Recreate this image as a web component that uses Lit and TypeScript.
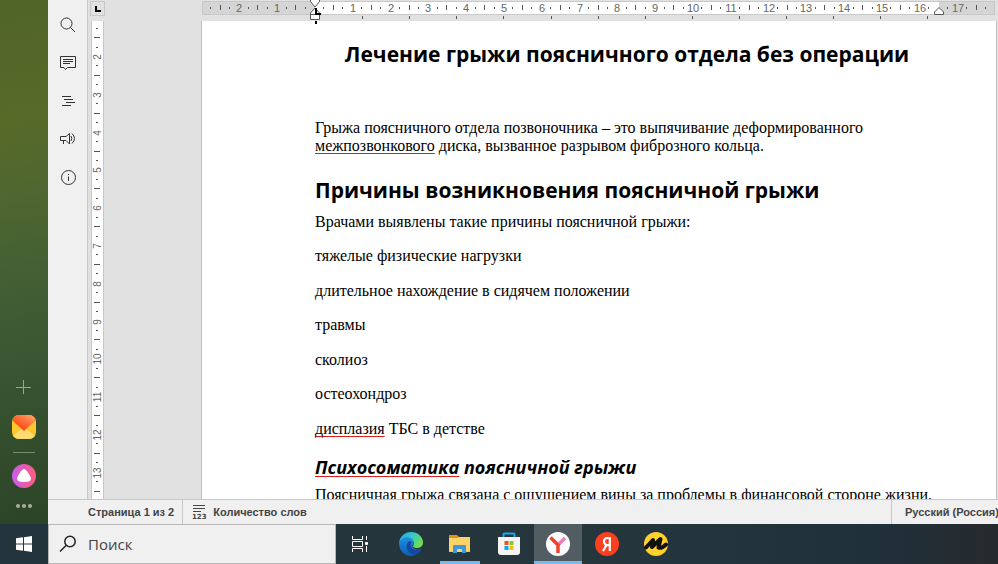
import { LitElement, html, svg, css } from "lit";
import { customElement, state } from "lit/decorators.js";

const CM = 37.8;
const TAB = 47.1;

const steps = (from: number, to: number): number[] => {
  const out: number[] = [];
  for (let q = from * 4; q <= to * 4; q++) out.push(q / 4);
  return out;
};

@customElement("ruler-across")
class RulerAcross extends LitElement {
  static styles = css`
    :host { display: block; height: 21px; }
    svg { display: block; width: 100%; height: 21px; overflow: visible; }
    text { font: 11px "Liberation Sans", Arial, sans-serif; fill: #666; text-anchor: middle; }
    .edge { fill: #c8c8c8; }
    .off { fill: #d5d5d5; }
    .on { fill: #fff; }
    .tick { fill: #555; }
    .mark { fill: #fff; stroke: #555; }
    .ink { fill: #000; }
  `;
  render() {
    const zero = 113;
    return html`<svg aria-hidden="true">
      <rect class="edge" x="0" y="1" width="793" height="14" />
      <rect class="off" x="1" y="2" width="791" height="12" />
      <rect class="on" x="113" y="2" width="624" height="12" />
      ${steps(-2.75, 17.75).map((cm) => {
        const x = Math.round(zero + cm * CM);
        if (cm === 0 || cm === 16.5) return null;
        if (Number.isInteger(cm)) return svg`<text x=${x} y="12">${Math.abs(cm)}</text>`;
        const half = Number.isInteger(cm * 2);
        return svg`<rect class="tick" x=${x - 1} y=${half ? 5 : 7} width="1" height=${half ? 5 : 2} />`;
      })}
      ${Array.from({ length: 13 }, (_, i) => svg`<rect class="tick" x=${Math.round(zero + (i + 1) * TAB)} y="16" width="1" height="3" />`)}
      <path class="ink" d="M113 21h2v3h-2z" />
      <path class="mark" d="M108.500 -1V1.500L113 7L117.500 1.500V-1" />
      <path class="mark" d="M108.500 19.500V13L113 8L117.500 13V19.500ZM108.500 14.500H117.500" />
      <path class="ink" d="M113 8h2v5h4v2h-6z" />
      <path class="mark" d="M732.500 14.500V12L737 7.500L741.500 12V14.500Z" />
    </svg>`;
  }
}

@customElement("ruler-down")
class RulerDown extends LitElement {
  static styles = css`
    :host { display: block; background: #fff; border: solid #c8c8c8; border-width: 0 1px; min-height: 0; overflow: hidden; }
    svg { display: block; width: 11px; height: 100%; }
    text { font: 10px "Liberation Sans", Arial, sans-serif; fill: #666; text-anchor: middle; }
    .tick { fill: #555; }
  `;
  @state() private room = 478;
  private watcher = new ResizeObserver(() => { this.room = this.clientHeight; });

  connectedCallback() {
    super.connectedCallback();
    this.watcher.observe(this);
  }
  disconnectedCallback() {
    super.disconnectedCallback();
    this.watcher.disconnect();
  }
  render() {
    const last = Math.floor(((this.room + 34) / CM) * 4) / 4;
    return html`<svg aria-hidden="true">
      ${steps(1.25, last).map((cm) => {
        const y = Math.round(cm * CM - 39.6);
        if (Number.isInteger(cm)) return svg`<text transform="translate(9 ${y}) rotate(-90)">${cm}</text>`;
        const half = Number.isInteger(cm * 2);
        return svg`<rect class="tick" x=${half ? 2 : 4} y=${y - 1} width=${half ? 6 : 2} height="1" />`;
      })}
    </svg>`;
  }
}

const iconSearch = svg`<circle cx="6.500" cy="6.500" r="5.500"/><path d="M10.500 10.500L15 15"/>`;
const iconComments = svg`<path d="M.5 1.500H15.500V12.500H7.500L5.500 14.500L4 12.500H.5ZM3 4.500H13M3 6.500H13M3 8.500H10"/>`;
const iconOutline = svg`<path d="M2 3.500H11M4 6.500H13M6 9.500H15M2 12.500H11"/>`;
const iconVoice = svg`<path d="M.5 5.500H6L9.500 2.500V13L6 9.500H.5ZM3.500 9.500V13M11 5Q12.500 7.500 11 10M12 2.500Q17 7.500 12 12.500"/>`;
const iconInfo = svg`<circle cx="8.500" cy="8.500" r="7"/><path d="M8.500 7.500V12M8.500 5V6"/>`;

const tools = [
  { name: "Поиск", icon: iconSearch },
  { name: "Комментарии", icon: iconComments },
  { name: "Навигация", icon: iconOutline },
  { name: "Обратная связь", icon: iconVoice },
  { name: "О программе", icon: iconInfo },
];

const iconTaskView = svg`<g fill="none" stroke="#fff"><path d="M4.500 4V7.500H14.500V4M4.500 20V16.500H14.500V20M4.500 9.500H14.500V14.500H4.500ZM18.500 4V8M18.500 14V20"/><path fill="#fff" d="M17.500 10.500h2v2h-2z"/></g>`;
const iconEdge = svg`
  <defs>
    <linearGradient id="ea" x1="0" y1="0" x2="1" y2="0.500"><stop offset="0" stop-color="#2ba5e2"/><stop offset=".5" stop-color="#2fc6d0"/><stop offset="1" stop-color="#6fdc52"/></linearGradient>
    <linearGradient id="eb" x1="0" y1="0" x2="0" y2="1"><stop offset="0" stop-color="#1e8fe0"/><stop offset="1" stop-color="#0d5cb5"/></linearGradient>
  </defs>
  <path fill="url(#eb)" d="M0 11C1 6 6 4 11 6C15 8 15 11 14 12C12 16 16 18 20 17.500Q21.500 17 22.500 16.500C20 22 15 24 12 24C5 24 0 18 0 11Z"/>
  <path fill="#1449a0" d="M9 10C5 16 10 22.500 16 23C20 21.500 22 18.500 22.500 16.500C17 20 12 17 11.500 13Q11.500 11 13 10Q11 8.500 9 10Z"/>
  <path fill="url(#ea)" d="M0 11.500C1 3 7 0 12 0C19 0 24 5 24 10.500C24 15 20 16.500 17 16C14 15.500 13.500 14.500 14.500 13C16 10 13 5.500 8 5.500C4 5.500 1 8 0 11.500Z"/>`;
const iconFolder = svg`
  <path fill="#d99413" d="M1 3H9L11 5H22V8H1Z"/><path fill="#fdd367" d="M1 6H9L11 5H22V20H1Z"/>
  <path fill="#3d98d8" d="M5 14Q5 13 6 13H17Q18 13 18 14V21H14V17H9V21H5Z"/><path fill="#f7c650" d="M1 19H5V20H1ZM18 19H22V20H18Z"/>`;
const iconStore = svg`
  <path d="M6.500 6V2.500Q6.500 1.500 7.500 1.500H16.500Q17.500 1.500 17.500 2.500V6" fill="none" stroke="#21a5ee" stroke-width="2"/>
  <path fill="#f4f4f4" d="M1 5H23V20Q23 23 20 23H4Q1 23 1 20Z"/>
  <path fill="#f1511b" d="M7.500 9h4v4h-4z"/><path fill="#80cc28" d="M12.500 9h4v4h-4z"/><path fill="#00adef" d="M7.500 14h4v4h-4z"/><path fill="#fbbc09" d="M12.500 14h4v4h-4z"/>`;
const iconBrowser = svg`
  <circle cx="12" cy="12" r="12" fill="#fff"/>
  <path d="M19 6L12 13" stroke="#f17bb5" stroke-width="3.500" fill="none"/>
  <path d="M4.500 5.500L12 13V21" stroke="#f0432c" stroke-width="3.500" fill="none"/>`;
const iconYandex = svg`
  <circle cx="12" cy="12" r="12" fill="#fc3f1d"/>
  <path fill="none" stroke="#fff" stroke-width="2.200" d="M14.800 19V6H12.500Q9 6 9 9.500Q9 12 11.500 13L8 19M14.500 13.200H11.500"/>`;
const iconMarket = svg`
  <circle cx="12" cy="12" r="12" fill="#fc3"/><circle cx="12" cy="12" r="11" fill="#ffd426"/>
  <path fill="none" stroke="#111" stroke-width="4" stroke-linejoin="round" stroke-linecap="round" d="M2 15.500L9 8L8 15L16.500 7L14.500 15.500Q17 17 22 12.500"/>`;

const apps = [
  { name: "Проводник", icon: iconFolder, state: "open" },
  { name: "Microsoft Store", icon: iconStore, state: "" },
  { name: "Яндекс Браузер", icon: iconBrowser, state: "active" },
  { name: "Яндекс", icon: iconYandex, state: "" },
  { name: "Маркет", icon: iconMarket, state: "" },
];

const causes = [
  html`тяжелые физические нагрузки`,
  html`длительное нахождение в сидячем положении`,
  html`травмы`,
  html`сколиоз`,
  html`остеохондроз`,
  html`<span class="typo">дисплазия</span> ТБС в детстве`,
];

@customElement("app-root")
class AppRoot extends LitElement {
  static styles = css`
    :host {
      display: grid;
      grid-template: minmax(0, 1fr) 40px / 48px minmax(0, 1fr);
      height: 100vh;
      overflow: hidden;
      font-family: "Liberation Sans", Arial, sans-serif;
    }
    * { box-sizing: border-box; }
    button { border: 0; padding: 0; margin: 0; background: none; font: inherit; color: inherit; display: flex; align-items: center; justify-content: center; }
    svg { display: block; flex: none; }

    .dock {
      background: linear-gradient(170deg, #506428 0%, #586a28 22%, #4f672f 36%, #3f5c35 58%, #35502f 78%, #2c4426 100%);
      display: flex; flex-direction: column; align-items: center; justify-content: flex-end;
      padding-bottom: 16px;
    }
    .dock button { width: 24px; }
    .dock .add { margin-bottom: 20px; }
    .dock .line { width: 22px; height: 1px; border: 0; background: #7c8b6c; margin: 13px 0 11px; }
    .dock .more { margin-top: 16px; }

    .editor { display: grid; grid-template: minmax(0, 1fr) 25px / 40px minmax(0, 1fr); min-height: 0; background: #e1e1e1; }
    .tools { background: #f0f0f0; border-right: 1px solid #c8c8c8; display: flex; flex-direction: column; padding-top: 6px; }
    .tools button { height: 38px; flex: none; }
    .tools svg { fill: none; stroke: #333; }

    .work { display: grid; grid-template: 21px minmax(0, 1fr) / 17px minmax(0, 1fr); min-width: 0; min-height: 0; }
    .corner { margin: 1px 0 5px 2px; border: 1px solid #c8c8c8; background: #e1e1e1; }
    ruler-across { margin-left: 97px; position: relative; z-index: 1; }
    ruler-down { margin: 0 1px 0 3px; }
    .canvas { overflow: hidden; padding: 0 1px 0 96px; min-width: 0; }
    .page {
      background: #fff; border: solid #bfc1c5; border-width: 0 1px; min-height: 100%;
      padding: 18px 57px 0 113px; color: #000;
      font: 16px/18px "Liberation Serif", "Times New Roman", serif;
    }
    h1, h2, h3 { font-family: "Open Sans", "Noto Sans", sans-serif; font-weight: 700; margin: 0; }
    h1 { font-size: 21px; line-height: 30px; text-align: center; margin-bottom: 50px; }
    h2 { font-size: 21px; line-height: 30px; margin: 20px 0 8px; }
    h3 { font-size: 18px; line-height: 26px; font-style: italic; margin: 16px 0 6px; }
    p, ul { margin: 0; padding: 0; }
    ul { list-style: none; }
    li { margin-top: 16px; }
    li:nth-child(even) { margin-top: 17px; }
    .typo { text-decoration: underline 1px #e01b1b; text-underline-offset: 2px; text-decoration-skip-ink: none; }

    .status { grid-column: 1 / -1; background: #f0f0f0; border-top: 1px solid #c8c8c8; color: #444; font-size: 11px; font-weight: 700; display: flex; overflow: hidden; white-space: nowrap; }
    .status button { flex: none; }
    .pages { padding: 0 8px 0 40px; border-right: 1px solid #c8c8c8; }
    .words { padding-left: 10px; gap: 8px; }
    .words svg { fill: none; stroke: #444; }
    .words text { font: 700 7px "DejaVu Sans", sans-serif; fill: #444; stroke: none; }
    .lang { margin-left: auto; width: 107px; border-left: 1px solid #c8c8c8; }
    .status .lang button { height: 100%; margin-left: 13px; }

    .taskbar { grid-column: 1 / -1; display: flex; background: linear-gradient(90deg, #24343c 0%, #26363d 60%, #20303b 88%, #262a2c 100%); }
    .taskbar > button { width: 48px; flex: none; margin-right: 1px; border-bottom: 3px solid transparent; border-top: 3px solid transparent; }
    .taskbar > .start { margin-right: 0; }
    .taskbar > .view { margin-right: 3px; }
    .taskbar > .active { background: #515d63; border-top-color: #515d63; border-bottom-color: #76b9ed; }
    .taskbar > .open { background: linear-gradient(#76b9ed, #76b9ed) center bottom / 40px 3px no-repeat border-box; }
    .search { width: 288px; display: flex; align-items: center; gap: 11px; padding: 0 10px; background: #f0f0f0; border: 1px solid #b8b8b8; }
    .search svg { fill: none; stroke: #222; stroke-width: 1.500; }
    .search input { flex: 1; min-width: 0; border: 0; padding: 0; background: none; outline: 0; font: 15px/20px "Open Sans", "Noto Sans", sans-serif; color: #333; }
    .search input::placeholder { color: #444; opacity: 1; }
  `;

  render() {
    return html`
      <nav class="dock" aria-label="Панель">
        <button class="add" aria-label="Добавить"><svg width="16" height="16" stroke="#98a88c"><path d="M7.500 1V15M0 8.500H15" /></svg></button>
        <button aria-label="Почта">
          <svg width="24" height="24">
            <defs>
              <clipPath id="m"><rect width="24" height="24" rx="7" /></clipPath>
              <linearGradient id="mg" x1="0" y1="1" x2="1" y2="0"><stop offset=".3" stop-color="#ff4d1a" /><stop offset="1" stop-color="#ffab6b" /></linearGradient>
            </defs>
            <g clip-path="url(#m)">
              <path fill="#ffc62e" d="M0 0H24V24H0Z" /><path fill="#ffdb74" d="M0 24V22L12 12L24 22V24Z" /><path fill="url(#mg)" d="M0 0H24V5L12 16L0 5Z" />
            </g>
          </svg>
        </button>
        <hr class="line" />
        <button aria-label="Алиса">
          <svg width="24" height="24">
            <defs><linearGradient id="al"><stop offset="0" stop-color="#c95cf0" /><stop offset="1" stop-color="#ff5c7c" /></linearGradient></defs>
            <circle cx="12" cy="12" r="12" fill="url(#al)" />
            <path fill="#fff" d="M12 5C14 5 19 12 19 15Q19 18 12 18Q5 18 5 15C5 12 10 5 12 5Z" />
          </svg>
        </button>
        <button class="more" aria-label="Ещё"><svg width="16" height="4" fill="#a6b09f"><circle cx="2" cy="2" r="2" /><circle cx="8" cy="2" r="2" /><circle cx="14" cy="2" r="2" /></svg></button>
      </nav>

      <main class="editor">
        <div class="tools">
          ${tools.map((t) => html`<button aria-label=${t.name}><svg width="16" height="16">${t.icon}</svg></button>`)}
        </div>
        <div class="work">
          <button class="corner" aria-label="Табуляция"><svg width="6" height="6"><path d="M0 0H2V4H6V6H0Z" /></svg></button>
          <ruler-across></ruler-across>
          <ruler-down></ruler-down>
          <div class="canvas">
            <article class="page">
              <h1>Лечение грыжи поясничного отдела без операции</h1>
              <p>Грыжа поясничного отдела позвоночника – это выпячивание деформированного <span class="typo">межпозвонкового</span> диска, вызванное разрывом фиброзного кольца.</p>
              <h2>Причины возникновения поясничной грыжи</h2>
              <p>Врачами выявлены такие причины поясничной грыжи:</p>
              <ul>${causes.map((c) => html`<li>${c}</li>`)}</ul>
              <h3><span class="typo">Психосоматика</span> поясничной грыжи</h3>
              <p>Поясничная грыжа связана с ощущением вины за проблемы в финансовой стороне жизни.</p>
            </article>
          </div>
        </div>
        <div class="status">
          <button class="pages">Страница 1 из 2</button>
          <button class="words">
            <svg width="12" height="16" overflow="visible" aria-hidden="true"><path d="M0 1.500H12M0 4.500H12M0 7.500H8" /><text x="-1" y="15">123</text></svg>
            Количество слов
          </button>
          <div class="lang"><button>Русский (Россия)</button></div>
        </div>
      </main>

      <footer class="taskbar">
        <button class="start" aria-label="Пуск"><svg width="16" height="16" fill="#fff"><path d="M0 2.300L7 1.300V7.500H0ZM8 1.200L16 0V7.500H8ZM0 8.500H7V14.700L0 13.700ZM8 8.500H16V16L8 14.800Z" /></svg></button>
        <label class="search">
          <svg width="18" height="18" aria-hidden="true"><circle cx="11" cy="6.500" r="5.200" /><path d="M7.300 10.300L1 16.500" /></svg>
          <input type="text" placeholder="Поиск" aria-label="Поиск" />
        </label>
        <button class="view" aria-label="Представление задач"><svg width="24" height="24">${iconTaskView}</svg></button>
        <button aria-label="Microsoft Edge"><svg width="24" height="24">${iconEdge}</svg></button>
        ${apps.map((a) => html`<button class=${a.state} aria-label=${a.name}><svg width="24" height="24">${a.icon}</svg></button>`)}
      </footer>
    `;
  }
}
